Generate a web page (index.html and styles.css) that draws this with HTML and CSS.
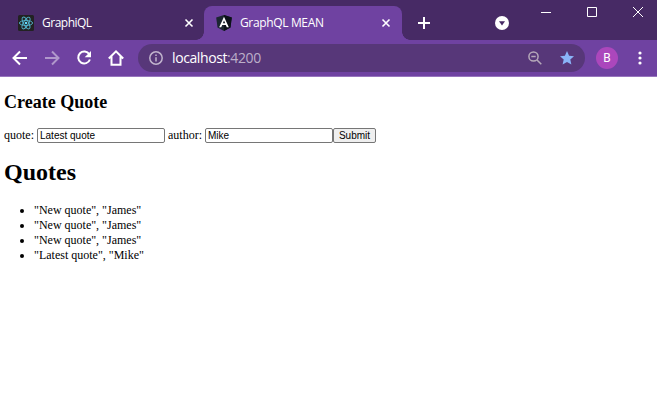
FILE: index.html
```html
<!DOCTYPE html>
<html lang="en">
<head>
<meta charset="utf-8">
<title>GraphQL MEAN</title>
<link rel="stylesheet" href="styles.css">
</head>
<body>
<header class="tabstrip">
  <div class="tab">
    <svg class="favicon" viewBox="0 0 16 16"><rect width="16" height="16" rx="1.5" fill="#222"/><g fill="none" stroke="#53b5ce" stroke-width=".9"><ellipse cx="8" cy="8" rx="6.6" ry="2.5"/><ellipse cx="8" cy="8" rx="6.6" ry="2.5" transform="rotate(60 8 8)"/><ellipse cx="8" cy="8" rx="6.6" ry="2.5" transform="rotate(120 8 8)"/></g><circle cx="8" cy="8" r="1.3" fill="#61dafb"/></svg>
    <span class="tab-title title-first">GraphiQL</span>
    <svg class="close" viewBox="0 0 8 8"><path d="M.5.5l7 7M7.5.5l-7 7"/></svg>
  </div>
  <div class="tab active">
    <svg class="favicon" viewBox="0 0 16 16"><path fill="#1c2631" d="M8 0l7.8 2.6-1.3 10L8 16l-6.5-3.4L.2 2.6z"/><path fill="#0c1119" d="M8 0l7.8 2.6-1.3 10L8 16z"/><path fill="#fff" fill-rule="evenodd" d="M8 1.8L3.2 12.3H5.200L6.200 9.900h3.600l1 2.400h2zM8 5.400l1.200 2.900H6.800z"/></svg>
    <span class="tab-title title-second">GraphQL MEAN</span>
    <svg class="close" viewBox="0 0 8 8"><path d="M.5.5l7 7M7.500.5l-7 7"/></svg>
  </div>
  <svg class="new-tab" viewBox="0 0 12 12"><path d="M6 0v12M0 6h12"/></svg>
  <svg class="tab-search" viewBox="0 0 14 14"><circle cx="7" cy="7" r="7" fill="#fff"/><path d="M4 5.200h6L7 9.400z" fill="#472a65"/></svg>
  <div class="window-controls">
    <svg viewBox="0 0 10 10"><path d="M0 5.500h10"/></svg>
    <svg viewBox="0 0 10 10"><path d="M.5.5h9v9h-9z"/></svg>
    <svg viewBox="0 0 10 10"><path d="M0 0l10 10M10 0L0 10"/></svg>
  </div>
</header>
<nav class="toolbar">
  <svg class="nav-icon" viewBox="0 0 16 16"><path d="M15 8H2M8 1.500L1.500 8 8 14.500"/></svg>
  <svg class="nav-icon forward" viewBox="0 0 16 16"><path d="M1 8h13M8 1.500L14.500 8 8 14.500"/></svg>
  <svg class="nav-icon" viewBox="0 0 16 16"><path d="M13.300 4.300A6 6 0 1 0 13.900 9.500"/><path class="solid" d="M15 1v6.300H8.700z"/></svg>
  <svg class="nav-icon" viewBox="0 0 16 16"><path d="M.8 8.500L8 1.400l7.200 7.100M3.500 6.500V14.800h9V6.500"/></svg>
  <div class="address">
    <svg class="info" viewBox="0 0 14 14"><circle cx="7" cy="7" r="6.200"/><path d="M7 6.200v4.300M7 3.500v1.500"/></svg>
    <span class="url">localhost<span class="port">:4200</span></span>
    <svg class="zoom-icon" viewBox="0 0 14 14"><circle cx="5.500" cy="5.500" r="4.600"/><path d="M9 9l4.300 4.300M3.300 5.500h4.400"/></svg>
    <svg class="star" viewBox="0 0 14 14"><path d="M7 0l2.100 4.700 4.900.5-3.700 3.400 1.100 5L7 11.100l-4.400 2.500 1.100-5L0 5.200l4.900-.5z"/></svg>
  </div>
  <span class="avatar">B</span>
  <svg class="more" viewBox="0 0 4 14"><circle cx="2" cy="2" r="1.600"/><circle cx="2" cy="7" r="1.600"/><circle cx="2" cy="12" r="1.600"/></svg>
</nav>
<main class="page">
  <h2>Create Quote</h2>
  <form class="quote-form">
    <label class="quote-label" for="quote">quote:</label>
    <input id="quote" type="text" value="Latest quote">
    <label class="author-label" for="author">author:</label>
    <input id="author" type="text" value="Mike">
    <button type="button">Submit</button>
  </form>
  <h1>Quotes</h1>
  <ul>
    <li>"New quote", "James"</li>
    <li>"New quote", "James"</li>
    <li>"New quote", "James"</li>
    <li>"Latest quote", "Mike"</li>
  </ul>
</main>
</body>
</html>
```
FILE: styles.css
```css
* { box-sizing: border-box; }
body {
  margin: 0;
  height: 412px;
  overflow: hidden;
  background: #fff;
  color: #000;
  font: 12px/15px "Liberation Serif", serif;
}
svg { display: block; flex: none; overflow: visible; }
.tabstrip {
  display: flex;
  height: 40px;
  padding-top: 6px;
  background: #472a65;
  font-family: "Open Sans", sans-serif;
  color: #fff;
}
.tab {
  position: relative;
  display: flex;
  align-items: center;
  width: 204px;
  height: 34px;
  padding: 0 11px 0 18px;
}
.tab.active {
  width: 198px;
  padding: 0 12px;
  border-radius: 8px 8px 0 0;
  background: #6f42a1;
}
.tab.active::before, .tab.active::after {
  content: "";
  position: absolute;
  bottom: 0;
  width: 8px;
  height: 8px;
}
.tab.active::before { left: -8px; background: radial-gradient(circle at 0 0, transparent 7.5px, #6f42a1 8px); }
.tab.active::after { right: -8px; background: radial-gradient(circle at 100% 0, transparent 7.5px, #6f42a1 8px); }
.favicon { width: 16px; height: 16px; }
.tab-title { margin-left: 8px; font-size: 12px; line-height: 16px; white-space: nowrap; }
.title-first { letter-spacing: -.5px; }
.title-second { letter-spacing: -.35px; }
.close { width: 8px; height: 8px; margin-left: auto; fill: none; stroke: #fff; stroke-width: 1.6; }
.new-tab { width: 12px; height: 12px; margin: 11px 0 0 16px; stroke: #fff; stroke-width: 2; }
.tab-search { width: 14px; height: 14px; margin: 10px 0 0 65px; }
.window-controls { display: flex; gap: 36px; margin: 1px 14px 0 auto; }
.window-controls svg { width: 10px; height: 10px; fill: none; stroke: #fff; stroke-width: 1; }
.toolbar {
  display: flex;
  align-items: center;
  height: 37px;
  padding: 0 15px 0 12px;
  background: #6f42a1;
  border-bottom: 1px solid #9775bd;
}
.nav-icon { width: 16px; height: 16px; margin-right: 16px; fill: none; stroke: #fff; stroke-width: 2; }
.nav-icon .solid { fill: #fff; stroke: none; }
.forward { opacity: .45; }
.address {
  display: flex;
  align-items: center;
  width: 447px;
  height: 28px;
  margin-left: -2px;
  padding: 0 11px;
  border-radius: 14px;
  background: #573779;
  font-family: "Open Sans", sans-serif;
}
.info { width: 14px; height: 14px; fill: none; stroke: #c1b4cd; stroke-width: 1.5; }
.url { margin-left: 9px; font-size: 14px; line-height: 20px; color: #fff; letter-spacing: -.4px; }
.port { color: #bcafc9; }
.zoom-icon { width: 14px; height: 14px; margin-left: auto; fill: none; stroke: #b5a8b9; stroke-width: 1.5; }
.star { width: 14px; height: 14px; margin-left: 18px; fill: #8ab4f8; }
.avatar {
  width: 22px;
  height: 22px;
  margin-left: 11px;
  border-radius: 50%;
  background: #ab47bc;
  color: #fff;
  font: 12px/22px Roboto, sans-serif;
  text-align: center;
}
.more { width: 4px; height: 14px; margin-left: auto; fill: #fff; }
.page { padding: 15px 4px 0; }
h2 { margin: 0; font-size: 18px; line-height: 21px; }
.quote-form { display: flex; align-items: center; height: 15px; margin-top: 15px; }
.quote-label { width: 33px; }
.author-label { width: 37px; margin-left: 3px; }
input {
  width: 128px;
  height: 15px;
  margin: 0;
  padding: 0 2px;
  border: 1px solid #767676;
  border-radius: 2px;
  color: #000;
  background: #fff;
  font: 10px/13px "Liberation Sans", sans-serif;
}
button {
  width: 43px;
  height: 15px;
  padding: 0;
  border: 1px solid #767676;
  border-radius: 2px;
  background: #efefef;
  color: #000;
  font: 10px/13px "Liberation Sans", sans-serif;
}
h1 { margin: 15px 0 0; font-size: 24px; line-height: 28px; }
ul { margin: 17px 0 0; padding-left: 30px; }
```
